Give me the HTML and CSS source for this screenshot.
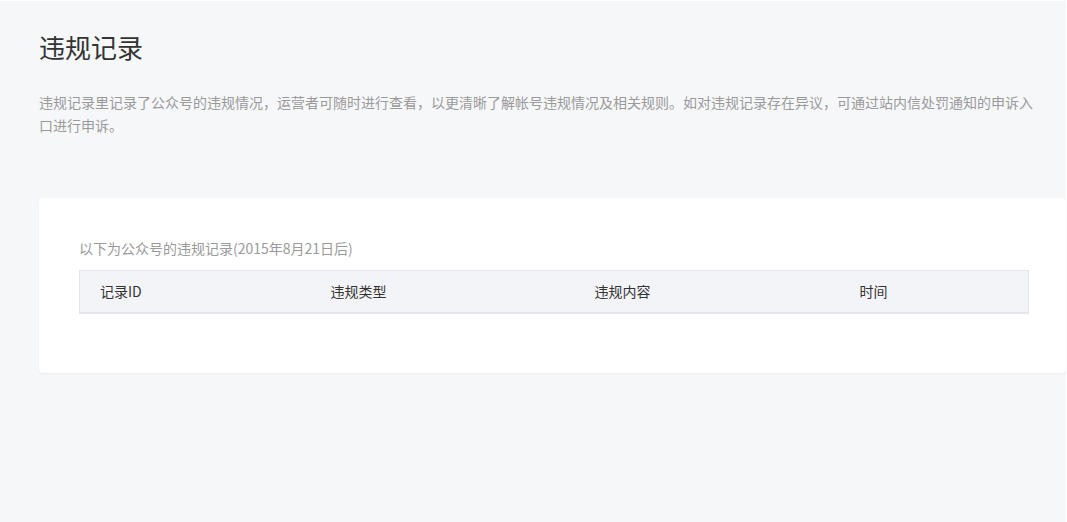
FILE: index.html
```html
<!DOCTYPE html>
<html lang="zh-CN">

<head>
    <meta charset="UTF-8">
    <title>违规记录</title>
    <link rel="stylesheet" href="styles.css">
</head>

<body>
    <div class="main">
        <h1 class="title">违规记录</h1>
        <p class="desc">违规记录里记录了公众号的违规情况，运营者可随时进行查看，以更清晰了解帐号违规情况及相关规则。如对违规记录存在异议，可通过站内信处罚通知的申诉入口进行申诉。</p>

        <div class="card">
            <div class="caption">以下为公众号的违规记录(2015年8月21日后)</div>
            <table class="record-table">
                <thead>
                    <tr>
                        <th class="col-id">记录ID</th>
                        <th class="col-type">违规类型</th>
                        <th class="col-content">违规内容</th>
                        <th class="col-time">时间</th>
                    </tr>
                </thead>
                <tbody></tbody>
            </table>
        </div>
    </div>
</body>

</html>
```

FILE: styles.css
```css
html,
body {
    margin: 0;
    height: 100%;
    background: #ffffff;
}

body {
    font-family: "Noto Sans CJK SC", "Microsoft YaHei", sans-serif;
    overflow: hidden;
}

.main {
    margin: 1px 1px 0 0;
    min-height: calc(100% - 1px);
    background-color: #f6f7f9;
    padding: 31px 0 0 39px;
    box-sizing: border-box;
}

.title {
    margin: 0;
    font-size: 26px;
    font-weight: normal;
    line-height: 30px;
    color: #333333;
}

.desc {
    margin: 29px 0 0;
    width: 1000px;
    font-size: 14px;
    line-height: 23px;
    color: #9a9a9a;
}

.card {
    margin-top: 61px;
    background: white;
    border-radius: 4px;
    box-shadow: 0 1px 2px rgba(0, 0, 0, 0.05);
    padding: 40px 0 59px 40px;
}

.caption {
    font-size: 14px;
    line-height: 20px;
    color: #9a9a9a;
    margin-bottom: 12px;
}

.record-table {
    width: 950px;
    border-collapse: collapse;
    table-layout: fixed;
}

.record-table th {
    box-sizing: border-box;
    background-color: #f3f4f7;
    border-top: 1px solid #e4e6eb;
    border-bottom: 2px solid #e4e6eb;
    height: 42px;
    padding: 0 0 0 21px;
    text-align: left;
    font-size: 14px;
    font-weight: normal;
    color: #333333;
}

.record-table th:first-child {
    border-left: 1px solid #e4e6eb;
    padding-left: 20px;
}

.record-table th:last-child {
    border-right: 1px solid #e4e6eb;
}

.col-id {
    width: 230px;
}

.col-type {
    width: 264px;
}

.col-content {
    width: 265px;
}
```
